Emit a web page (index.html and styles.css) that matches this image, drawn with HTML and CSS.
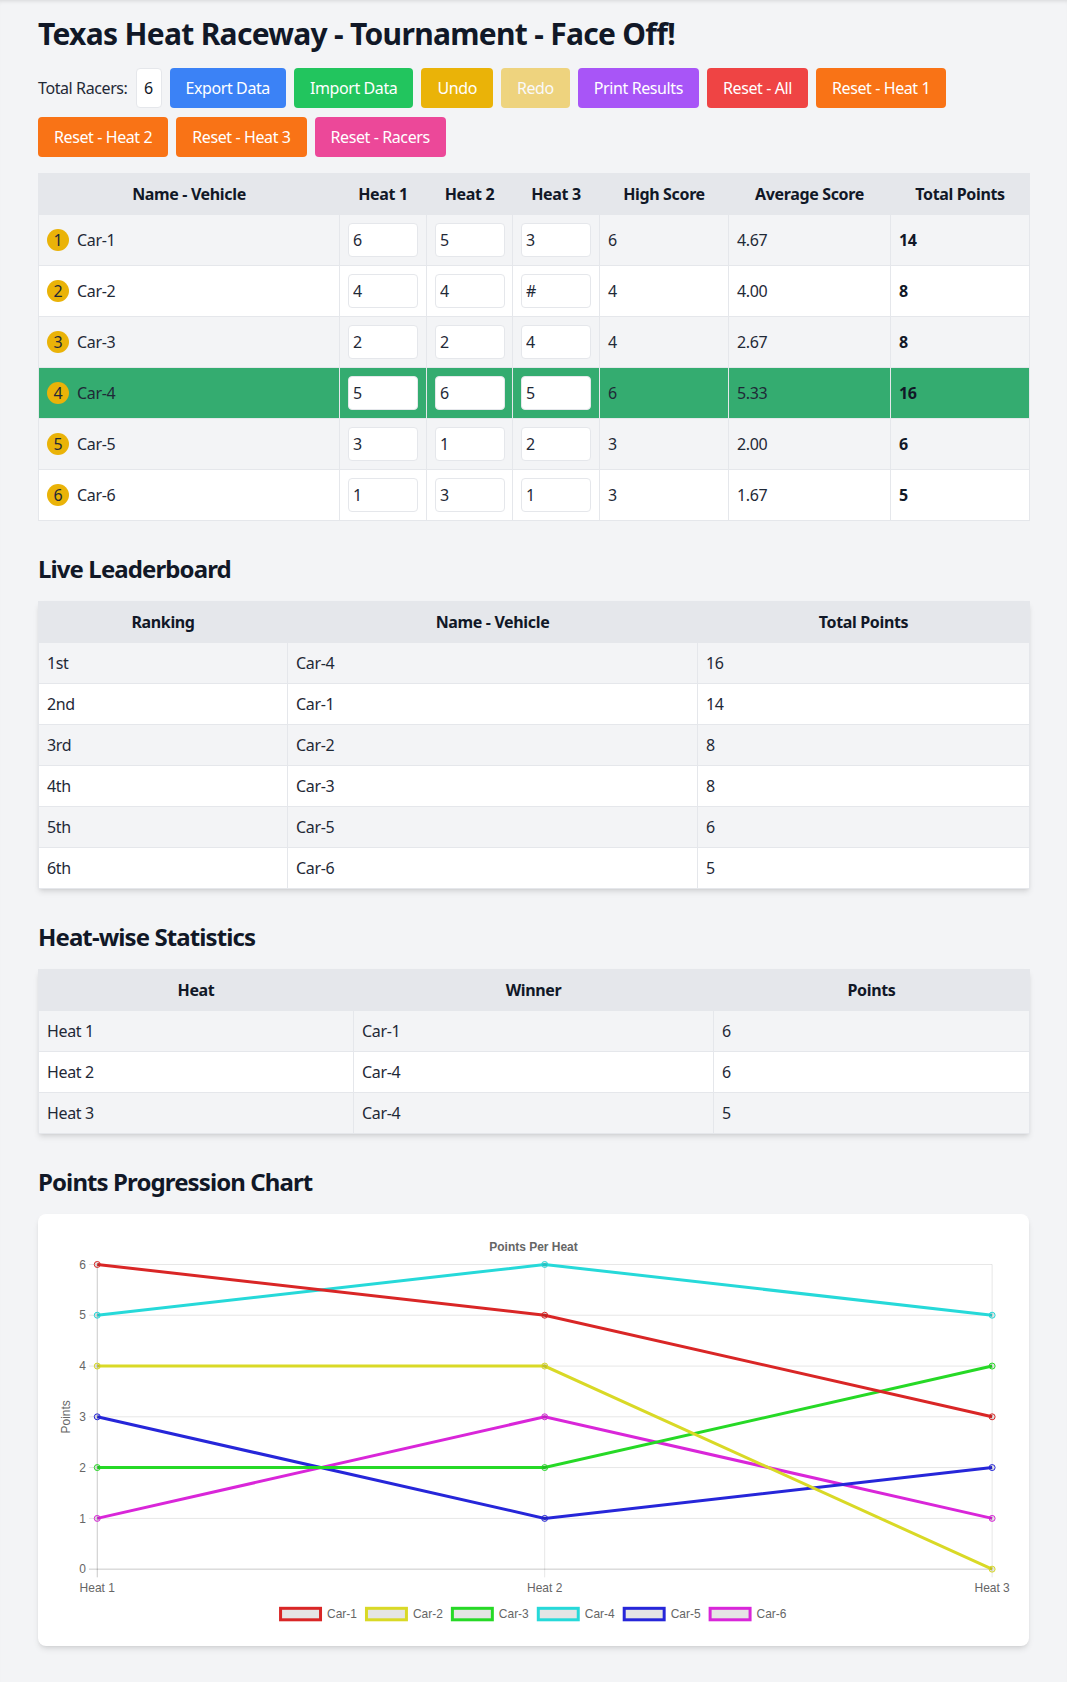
FILE: index.html
```html
<!DOCTYPE html>
<html lang="en">
<head>
<meta charset="utf-8">
<title>Texas Heat Raceway - Tournament - Face Off!</title>
<link rel="stylesheet" href="styles.css">
</head>
<body>
<div class="page">
  <h1 class="title">Texas Heat Raceway - Tournament - Face Off!</h1>

  <div class="controls">
    <label class="racer-label" for="racers">Total Racers:</label>
    <input id="racers" class="racer-input" type="text" value="6">
    <button class="btn btn-blue">Export Data</button>
    <button class="btn btn-green">Import Data</button>
    <button class="btn btn-yellow">Undo</button>
    <button class="btn btn-yellow btn-disabled">Redo</button>
    <button class="btn btn-purple">Print Results</button>
    <button class="btn btn-red">Reset - All</button>
    <button class="btn btn-orange">Reset - Heat 1</button>
    <button class="btn btn-orange">Reset - Heat 2</button>
    <button class="btn btn-orange">Reset - Heat 3</button>
    <button class="btn btn-pink">Reset - Racers</button>
  </div>

  <table class="data-table score-table">
    <colgroup>
      <col class="c-name"><col class="c-heat"><col class="c-heat2"><col class="c-heat"><col class="c-high"><col class="c-avg"><col class="c-total">
    </colgroup>
    <thead>
      <tr><th>Name - Vehicle</th><th>Heat 1</th><th>Heat 2</th><th>Heat 3</th><th>High Score</th><th>Average Score</th><th>Total Points</th></tr>
    </thead>
    <tbody>
      <tr>
        <td><div class="racer"><span class="badge">1</span>Car-1</div></td>
        <td><input class="score" type="text" value="6"></td>
        <td><input class="score" type="text" value="5"></td>
        <td><input class="score" type="text" value="3"></td>
        <td>6</td><td>4.67</td><td class="total">14</td>
      </tr>
      <tr>
        <td><div class="racer"><span class="badge">2</span>Car-2</div></td>
        <td><input class="score" type="text" value="4"></td>
        <td><input class="score" type="text" value="4"></td>
        <td><input class="score" type="text" placeholder="#"></td>
        <td>4</td><td>4.00</td><td class="total">8</td>
      </tr>
      <tr>
        <td><div class="racer"><span class="badge">3</span>Car-3</div></td>
        <td><input class="score" type="text" value="2"></td>
        <td><input class="score" type="text" value="2"></td>
        <td><input class="score" type="text" value="4"></td>
        <td>4</td><td>2.67</td><td class="total">8</td>
      </tr>
      <tr class="leader">
        <td><div class="racer"><span class="badge">4</span>Car-4</div></td>
        <td><input class="score" type="text" value="5"></td>
        <td><input class="score" type="text" value="6"></td>
        <td><input class="score" type="text" value="5"></td>
        <td>6</td><td>5.33</td><td class="total">16</td>
      </tr>
      <tr>
        <td><div class="racer"><span class="badge">5</span>Car-5</div></td>
        <td><input class="score" type="text" value="3"></td>
        <td><input class="score" type="text" value="1"></td>
        <td><input class="score" type="text" value="2"></td>
        <td>3</td><td>2.00</td><td class="total">6</td>
      </tr>
      <tr>
        <td><div class="racer"><span class="badge">6</span>Car-6</div></td>
        <td><input class="score" type="text" value="1"></td>
        <td><input class="score" type="text" value="3"></td>
        <td><input class="score" type="text" value="1"></td>
        <td>3</td><td>1.67</td><td class="total">5</td>
      </tr>
    </tbody>
  </table>

  <section class="section">
    <h2 class="section-title">Live Leaderboard</h2>
    <table class="data-table shadow-table">
      <colgroup><col class="l-rank"><col class="l-name"><col class="l-total"></colgroup>
      <thead><tr><th>Ranking</th><th>Name - Vehicle</th><th>Total Points</th></tr></thead>
      <tbody class="compact">
        <tr><td>1st</td><td>Car-4</td><td>16</td></tr>
        <tr><td>2nd</td><td>Car-1</td><td>14</td></tr>
        <tr><td>3rd</td><td>Car-2</td><td>8</td></tr>
        <tr><td>4th</td><td>Car-3</td><td>8</td></tr>
        <tr><td>5th</td><td>Car-5</td><td>6</td></tr>
        <tr><td>6th</td><td>Car-6</td><td>5</td></tr>
      </tbody>
    </table>
  </section>

  <section class="section">
    <h2 class="section-title">Heat-wise Statistics</h2>
    <table class="data-table shadow-table">
      <colgroup><col class="h-heat"><col class="h-winner"><col class="h-points"></colgroup>
      <thead><tr><th>Heat</th><th>Winner</th><th>Points</th></tr></thead>
      <tbody class="compact stats">
        <tr><td>Heat 1</td><td>Car-1</td><td>6</td></tr>
        <tr><td>Heat 2</td><td>Car-4</td><td>6</td></tr>
        <tr><td>Heat 3</td><td>Car-4</td><td>5</td></tr>
      </tbody>
    </table>
  </section>

  <section class="section">
    <h2 class="section-title">Points Progression Chart</h2>
    <div class="chart-card">
      <svg class="chart" viewBox="0 0 960 400" xmlns="http://www.w3.org/2000/svg">
        <g class="grid">
          <line x1="35" y1="34.3" x2="939.1" y2="34.3"/>
          <line x1="35" y1="85.1" x2="939.1" y2="85.1"/>
          <line x1="35" y1="136" x2="939.1" y2="136"/>
          <line x1="35" y1="186.8" x2="939.1" y2="186.8"/>
          <line x1="35" y1="237.6" x2="939.1" y2="237.6"/>
          <line x1="35" y1="288.5" x2="939.1" y2="288.5"/>
          <line x1="491.2" y1="34.3" x2="491.2" y2="347.5"/>
          <line x1="939.1" y1="34.3" x2="939.1" y2="347.5"/>
        </g>
        <g class="axis">
          <line x1="35" y1="339.3" x2="939.1" y2="339.3"/>
          <line x1="43.3" y1="34.3" x2="43.3" y2="347.5"/>
        </g>
        <text class="chart-title" x="480" y="20.7" text-anchor="middle">Points Per Heat</text>
        <g class="tick" text-anchor="end">
          <text x="32" y="38.5">6</text>
          <text x="32" y="89.3">5</text>
          <text x="32" y="140.2">4</text>
          <text x="32" y="191">3</text>
          <text x="32" y="241.8">2</text>
          <text x="32" y="292.7">1</text>
          <text x="32" y="343.5">0</text>
        </g>
        <g class="tick" text-anchor="middle">
          <text x="43.3" y="361.7">Heat 1</text>
          <text x="491.2" y="361.7">Heat 2</text>
          <text x="939.1" y="361.7">Heat 3</text>
        </g>
        <text class="tick" text-anchor="middle" transform="translate(15.8 186.8) rotate(-90)">Points</text>

        <g class="series s6">
          <polyline points="43.3,288.5 491.2,186.8 939.1,288.5"/>
          <circle cx="43.3" cy="288.5" r="3"/><circle cx="491.2" cy="186.8" r="3"/><circle cx="939.1" cy="288.5" r="3"/>
        </g>
        <g class="series s5">
          <polyline points="43.3,186.8 491.2,288.5 939.1,237.6"/>
          <circle cx="43.3" cy="186.8" r="3"/><circle cx="491.2" cy="288.5" r="3"/><circle cx="939.1" cy="237.6" r="3"/>
        </g>
        <g class="series s4">
          <polyline points="43.3,85.1 491.2,34.3 939.1,85.1"/>
          <circle cx="43.3" cy="85.1" r="3"/><circle cx="491.2" cy="34.3" r="3"/><circle cx="939.1" cy="85.1" r="3"/>
        </g>
        <g class="series s3">
          <polyline points="43.3,237.6 491.2,237.6 939.1,136"/>
          <circle cx="43.3" cy="237.6" r="3"/><circle cx="491.2" cy="237.6" r="3"/><circle cx="939.1" cy="136" r="3"/>
        </g>
        <g class="series s2">
          <polyline points="43.3,136 491.2,136 939.1,339.3"/>
          <circle cx="43.3" cy="136" r="3"/><circle cx="491.2" cy="136" r="3"/><circle cx="939.1" cy="339.3" r="3"/>
        </g>
        <g class="series s1">
          <polyline points="43.3,34.3 491.2,85.1 939.1,186.8"/>
          <circle cx="43.3" cy="34.3" r="3"/><circle cx="491.2" cy="85.1" r="3"/><circle cx="939.1" cy="186.8" r="3"/>
        </g>

        <g class="legend">
          <rect class="lb s1" x="226.8" y="378.5" width="40" height="11.5"/><text x="273.3" y="388.6">Car-1</text>
          <rect class="lb s2" x="312.8" y="378.5" width="40" height="11.5"/><text x="359.3" y="388.6">Car-2</text>
          <rect class="lb s3" x="398.8" y="378.5" width="40" height="11.5"/><text x="445.3" y="388.6">Car-3</text>
          <rect class="lb s4" x="484.8" y="378.5" width="40" height="11.5"/><text x="531.3" y="388.6">Car-4</text>
          <rect class="lb s5" x="570.8" y="378.5" width="40" height="11.5"/><text x="617.3" y="388.6">Car-5</text>
          <rect class="lb s6" x="656.8" y="378.5" width="40" height="11.5"/><text x="703.3" y="388.6">Car-6</text>
        </g>
      </svg>
    </div>
  </section>
</div>
</body>
</html>
```

FILE: styles.css
```css
html {
  background: #f3f4f6;
  box-shadow: inset 0 4px 4px -3px rgba(0, 0, 0, 0.12);
}

body {
  margin: 0;
  font-family: "Noto Sans", "Open Sans", sans-serif;
  font-size: 16px;
  line-height: 24px;
  letter-spacing: -0.35px;
  color: #1f2937;
}

.page {
  padding: 16px 38px 36px;
}

.title {
  margin: 0 0 16px;
  font-size: 30px;
  line-height: 36px;
  font-weight: 700;
  letter-spacing: -0.7px;
  color: #111827;
}

.controls {
  display: flex;
  flex-wrap: wrap;
  align-items: center;
  gap: 9px 8px;
  margin-bottom: 16px;
  letter-spacing: -0.4px;
}

.racer-label {
  font-size: 16px;
}

.racer-input {
  box-sizing: border-box;
  width: 26px;
  height: 40px;
  padding: 0;
  border: 1px solid #e5e7eb;
  border-radius: 4px;
  background: #fff;
  font: inherit;
  letter-spacing: inherit;
  color: #111827;
  text-align: center;
}

.btn {
  height: 40px;
  padding: 0 16px;
  border: 0;
  border-radius: 4px;
  font: inherit;
  letter-spacing: inherit;
  color: #fff;
}

.btn-blue { background: #3b82f6; }
.btn-green { background: #22c55e; }
.btn-yellow { background: #eab308; }
.btn-purple { background: #a855f7; }
.btn-red { background: #ef4444; }
.btn-orange { background: #f97316; }
.btn-pink { background: #ec4899; }
.btn-disabled { opacity: 0.5; }

.data-table {
  width: 100%;
  border-collapse: collapse;
  table-layout: fixed;
}

.data-table th {
  padding: 8px;
  border: 1px solid #e5e7eb;
  background: #e5e7eb;
  font-weight: 700;
  color: #111827;
  text-align: center;
}

.data-table td {
  padding: 8px;
  border: 1px solid #e5e7eb;
  text-align: left;
  vertical-align: middle;
}

.data-table tbody tr:nth-child(odd) td { background: #f3f4f6; }
.data-table tbody tr:nth-child(even) td { background: #fff; }
.data-table tbody tr.leader td { background: #34ac70; }

.c-name { width: 301px; }
.c-heat { width: 87px; }
.c-heat2 { width: 86px; }
.c-high { width: 129px; }
.c-avg { width: 162px; }
.c-total { width: 139px; }

.l-rank { width: 249px; }
.l-name { width: 410px; }
.l-total { width: 332px; }

.h-heat { width: 315px; }
.h-winner { width: 360px; }
.h-points { width: 316px; }

.racer {
  display: flex;
  align-items: center;
  gap: 8px;
}

.badge {
  display: inline-flex;
  align-items: center;
  justify-content: center;
  width: 22px;
  height: 22px;
  border-radius: 50%;
  background: #eab308;
  color: #1f2937;
  font-size: 16px;
}

.score {
  display: block;
  box-sizing: border-box;
  width: 70px;
  height: 34px;
  padding: 4px;
  border: 1px solid #e5e7eb;
  border-radius: 4px;
  background: #fff;
  font: inherit;
  letter-spacing: inherit;
  color: #1f2937;
}

.score::placeholder {
  color: #1f2937;
  opacity: 1;
}

.total {
  font-weight: 700;
  color: #111827;
}

.shadow-table {
  box-shadow: 0 4px 6px -1px rgba(0, 0, 0, 0.1), 0 2px 4px -2px rgba(0, 0, 0, 0.1);
}

.section {
  margin-top: 32px;
}

.section-title {
  margin: 0 0 16px;
  font-size: 24px;
  line-height: 32px;
  font-weight: 700;
  letter-spacing: -0.9px;
  color: #111827;
}

.chart-card {
  padding: 16px;
  border-radius: 8px;
  background: #fff;
  box-shadow: 0 4px 6px -1px rgba(0, 0, 0, 0.1), 0 2px 4px -2px rgba(0, 0, 0, 0.1);
}

.chart {
  display: block;
  width: 959px;
  height: 400px;
  font-family: "Liberation Sans", Arial, sans-serif;
  font-size: 12px;
  letter-spacing: 0;
}

.grid line {
  stroke: rgba(0, 0, 0, 0.1);
  stroke-width: 1;
}

.axis line {
  stroke: rgba(0, 0, 0, 0.22);
  stroke-width: 1;
}

.chart-title {
  font-weight: 700;
  fill: #666;
}

.tick,
.tick text,
.legend text {
  fill: #666;
}

.series polyline {
  fill: none;
  stroke-width: 3;
}

.series circle {
  fill: rgba(0, 0, 0, 0.1);
  stroke-width: 1;
}

.series.s1 polyline, .series.s1 circle { stroke: #d92626; }
.series.s2 polyline, .series.s2 circle { stroke: #d9d926; }
.series.s3 polyline, .series.s3 circle { stroke: #26d926; }
.series.s4 polyline, .series.s4 circle { stroke: #26d9d9; }
.series.s5 polyline, .series.s5 circle { stroke: #2626d9; }
.series.s6 polyline, .series.s6 circle { stroke: #d926d9; }

.lb {
  fill: rgba(0, 0, 0, 0.1);
  stroke-width: 3;
}

.lb.s1 { stroke: #d92626; }
.lb.s2 { stroke: #d9d926; }
.lb.s3 { stroke: #26d926; }
.lb.s4 { stroke: #26d9d9; }
.lb.s5 { stroke: #2626d9; }
.lb.s6 { stroke: #d926d9; }
```
